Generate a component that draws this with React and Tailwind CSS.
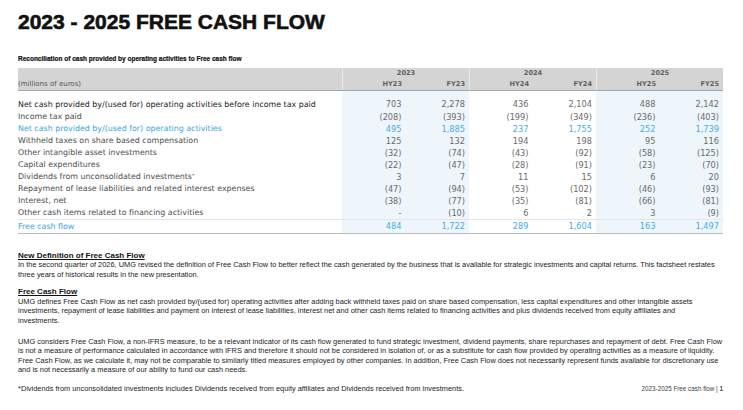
import React from 'react'

const rows = [
  { label: 'Net cash provided by/(used for) operating activities before income tax paid', values: ['703', '2,278', '436', '2,104', '488', '2,142'], tone: 'dark' },
  { label: 'Income tax paid', values: ['(208)', '(393)', '(199)', '(349)', '(236)', '(403)'] },
  { label: 'Net cash provided by/(used for) operating activities', values: ['495', '1,885', '237', '1,755', '252', '1,739'], tone: 'blue' },
  { label: 'Withheld taxes on share based compensation', values: ['125', '132', '194', '198', '95', '116'] },
  { label: 'Other intangible asset investments', values: ['(32)', '(74)', '(43)', '(92)', '(58)', '(125)'] },
  { label: 'Capital expenditures', values: ['(22)', '(47)', '(28)', '(91)', '(23)', '(70)'] },
  { label: 'Dividends from unconsolidated investments', star: true, values: ['3', '7', '11', '15', '6', '20'] },
  { label: 'Repayment of lease liabilities and related interest expenses', values: ['(47)', '(94)', '(53)', '(102)', '(46)', '(93)'] },
  { label: 'Interest, net', values: ['(38)', '(77)', '(35)', '(81)', '(66)', '(81)'] },
  { label: 'Other cash items related to financing activities', values: ['-', '(10)', '6', '2', '3', '(9)'] },
  { label: 'Free cash flow', values: ['484', '1,722', '289', '1,604', '163', '1,497'], tone: 'blue', total: true },
]

const groups = [
  { year: '2023', cols: ['HY23', 'FY23'] },
  { year: '2024', cols: ['HY24', 'FY24'] },
  { year: '2025', cols: ['HY25', 'FY25'] },
]

// 2023 and 2025 columns are tinted
const tinted = [true, true, false, false, true, true]

const tableFont = { fontFamily: '"DejaVu Sans", sans-serif' }
const noteFont = { fontFamily: '"Liberation Sans", Arial, sans-serif' }

function Row({ row }) {
  const labelColor =
    row.tone === 'dark' ? 'text-[#1a1a1a]' : row.tone === 'blue' ? 'text-[#3aa6df]' : 'text-[#4d4d4d]'
  const numColor = row.tone === 'blue' ? 'text-[#45ade3]' : 'text-[#6a6a6a]'
  return (
    <div className="flex h-[12.1px] items-center">
      <div className={`w-[324px] text-[7.9px] leading-none whitespace-nowrap ${labelColor}`}>
        {row.label}
        {row.star && <span className="relative -top-[2px] text-[4.5px]">*</span>}
      </div>
      {row.values.map((v, i) => (
        <div
          key={i}
          className={`w-[63.5px] h-full flex items-center justify-end pr-1 text-[8.2px] leading-none ${numColor} ${
            tinted[i] ? 'bg-[#eef6fc]' : ''
          }`}
        >
          {v}
        </div>
      ))}
    </div>
  )
}

export default function App() {
  return (
    <div className="w-[743px] h-[410px] bg-white overflow-hidden px-[18px]">
      <h1
        className="mt-[11px] text-[21px] leading-[21px] font-bold text-[#111111] whitespace-nowrap [-webkit-text-stroke:0.6px_#111111]"
        style={noteFont}
      >
        2023 - 2025 FREE CASH FLOW
      </h1>

      <p
        className="mt-[23px] text-[6.5px] leading-[8px] font-bold text-[#111111] whitespace-nowrap [-webkit-text-stroke:0.2px_#111111]"
        style={noteFont}
      >
        Reconciliation of cash provided by operating activities to Free cash flow
      </p>

      {/* Table */}
      <div className="mt-[5px] w-[705px]" style={tableFont}>
        {/* Header */}
        <div className="flex bg-[#d4d4d4] border-b border-[#a6a6a6]">
          <div className="w-[324px] flex flex-col">
            <div className="h-[11px]" />
            <div className="h-[11px] flex items-center text-[7px] leading-none text-[#555555]">(millions of euros)</div>
          </div>
          {groups.map((g) => (
            <div key={g.year} className="w-[127px] border-l border-[#e9e9e9] flex flex-col">
              <div className="h-[11px] flex items-center justify-center text-[6.6px] leading-none font-semibold text-[#5f5f5f]">
                {g.year}
              </div>
              <div className="h-[11px] flex">
                {g.cols.map((c) => (
                  <div
                    key={c}
                    className="flex-1 flex items-center justify-end pr-1 text-[6.6px] leading-none font-semibold text-[#5f5f5f]"
                  >
                    {c}
                  </div>
                ))}
              </div>
            </div>
          ))}
        </div>

        {/* Spacer keeps the tint running under the header */}
        <div className="flex h-[7.5px]">
          <div className="w-[324px]" />
          {tinted.map((t, i) => (
            <div key={i} className={`w-[63.5px] ${t ? 'bg-[#eef6fc]' : ''}`} />
          ))}
        </div>

        {rows.map((row) =>
          row.total ? (
            <React.Fragment key={row.label}>
              <div className="h-px bg-[#e6e6e6]" />
              <Row row={row} />
              <div className="h-px bg-[#bcbcbc]" />
            </React.Fragment>
          ) : (
            <Row key={row.label} row={row} />
          )
        )}
      </div>

      {/* Notes */}
      <div className="mt-[17px] text-[7.4px] leading-[9.5px] text-[#222222] whitespace-nowrap" style={noteFont}>
        <p className="text-[8px] font-bold underline text-[#111111]">New Definition of Free Cash Flow</p>
        <p>
          In the second quarter of 2026, UMG revised the definition of Free Cash Flow to better reflect the cash generated by the business that is available for strategic investments and capital returns. This factsheet restates
        </p>
        <p>three years of historical results in the new presentation.</p>

        <p className="mt-[8px] text-[8px] font-bold underline text-[#111111]">Free Cash Flow</p>
        <p>
          UMG defines Free Cash Flow as net cash provided by/(used for) operating activities after adding back withheld taxes paid on share based compensation, less capital expenditures and other intangible assets
        </p>
        <p>
          investments, repayment of lease liabilities and payment on interest of lease liabilities, interest net and other cash items related to financing activities and plus dividends received from equity affiliates and
        </p>
        <p>investments.</p>

        <div className="mt-[11.5px]">
          <p>
            UMG considers Free Cash Flow, a non-IFRS measure, to be a relevant indicator of its cash flow generated to fund strategic investment, dividend payments, share repurchases and repayment of debt. Free Cash Flow
          </p>
          <p>
            is not a measure of performance calculated in accordance with IFRS and therefore it should not be considered in isolation of, or as a substitute for cash flow provided by operating activities as a measure of liquidity.
          </p>
          <p>
            Free Cash Flow, as we calculate it, may not be comparable to similarly titled measures employed by other companies. In addition, Free Cash Flow does not necessarily represent funds available for discretionary use
          </p>
          <p>and is not necessarily a measure of our ability to fund our cash needs.</p>
        </div>

        <div className="mt-[9px] flex items-center justify-between w-[705px]">
          <p>
            *Dividends from unconsolidated investments includes Dividends received from equity affiliates and Dividends received from investments.
          </p>
          <p className="text-[6.3px] text-[#444444]">
            2023-2025 Free cash flow | <span className="font-bold">1</span>
          </p>
        </div>
      </div>
    </div>
  )
}
